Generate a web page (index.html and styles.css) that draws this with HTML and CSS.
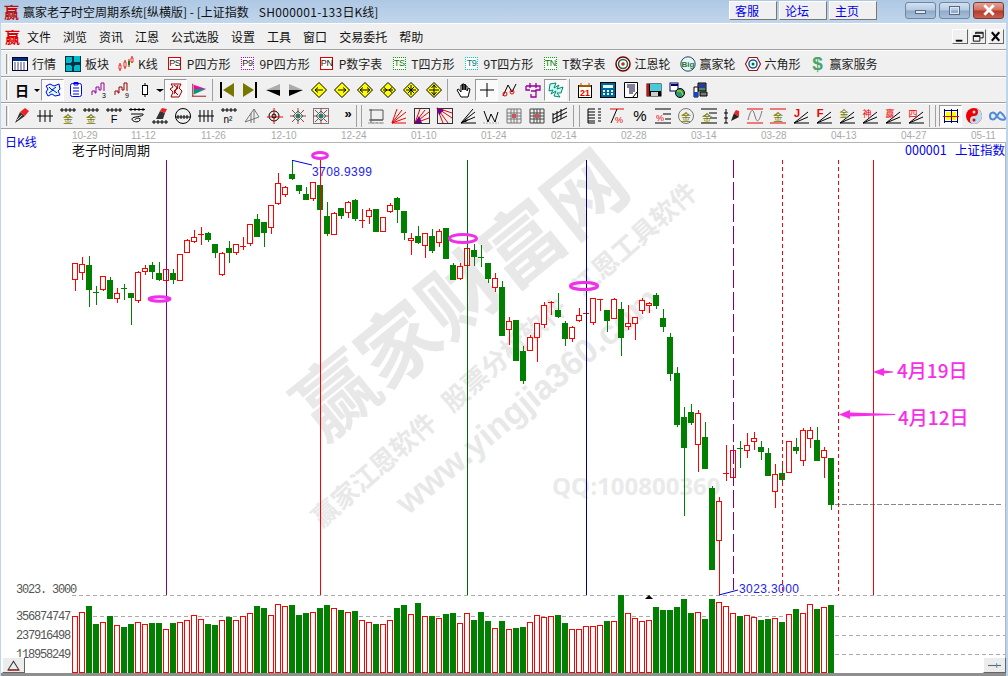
FILE: index.html
```html
<!DOCTYPE html>
<html lang="zh-CN">
<head>
<meta charset="utf-8">
<title>赢家老子时空周期系统</title>
<link rel="stylesheet" href="styles.css">
</head>
<body>
<svg class="defs" aria-hidden="true">
  <symbol id="dia" viewBox="0 0 16 16"><path d="M8 .5 15.5 8 8 15.5 .5 8Z" fill="#ff0" stroke="#000"/></symbol>
  <symbol id="fan" viewBox="0 0 16 16"><path d="M1 15H16M1 15 15 4M1 15 15 9" fill="none" stroke="#000"/></symbol>
  <symbol id="web" viewBox="0 0 16 16"><path d="M8 0V16M0 8H16M2 2 14 14M14 2 2 14" stroke="#c33" fill="none"/><path d="M8 3 13 8 8 13 3 8Z" fill="none" stroke="#087"/><circle cx="8" cy="8" r="2" fill="#087"/></symbol>
</svg>
<div class="titlebar">
  <span class="logo logo-title">赢</span>
  <span class="title-text">赢家老子时空周期系统[纵横版] - [上证指数<span class="title-code">SH000001-133</span>日K线]</span>
  <div class="links"><a class="link">客服</a><a class="link">论坛</a><a class="link">主页</a></div>
  <div class="winbtns">
    <span class="wb wb-min"><i class="wb-bar"></i></span>
    <span class="wb wb-max"><i class="wb-box"></i></span>
    <span class="wb wb-close"><svg class="wb-x" viewBox="0 0 12 10"><path d="M2 1 10 9M10 1 2 9" stroke="#fff" stroke-width="2.4"/></svg></span>
  </div>
</div>
<main class="main">
  <nav class="row menubar">
    <span class="logo logo-menu">赢</span>
    <span class="menu">文件</span><span class="menu">浏览</span><span class="menu">资讯</span><span class="menu">江恩</span><span class="menu">公式选股</span><span class="menu">设置</span><span class="menu">工具</span><span class="menu">窗口</span><span class="menu">交易委托</span><span class="menu">帮助</span>
    <div class="mdi">
      <span class="mdibtn"><svg viewBox="0 0 15 13"><path d="M3 10H10V12H3Z"/></svg></span>
      <span class="mdibtn"><svg viewBox="0 0 15 13"><path d="M5 2H13V8H10M5 2V4M5 3H13" fill="none" stroke="#000"/><path d="M2.500 5.500H9.500V11.500H2.500ZM2.500 6.500H9.500" fill="none" stroke="#000"/></svg></span>
      <span class="mdibtn"><svg viewBox="0 0 15 13"><path d="M3 2 11 11M11 2 3 11" stroke="#000" stroke-width="2.200"/></svg></span>
    </div>
  </nav>

  <div class="row tb1">
    <i class="grip"></i>
    <span class="item"><svg class="ic" viewBox="0 0 16 16"><rect x=".5" y="1.500" width="15" height="13" fill="#fff" stroke="#003"/><rect x="1" y="2" width="14" height="3" fill="#003080"/><path d="M2 7H14M2 9H14M2 11H14M2 13H14" stroke="#447" stroke-dasharray="2 1"/></svg><b>行情</b></span>
    <span class="item"><svg class="ic" viewBox="0 0 16 16"><rect width="16" height="16" fill="#034"/><path d="M1 1H7V7H1ZM9 0H15V6H9ZM1 9H7V15H1ZM9 9H15V15H9Z" fill="#0bc"/><path d="M6 6H10V10H6Z" fill="#034"/></svg><b>板块</b></span>
    <span class="item"><svg class="ic" viewBox="0 0 16 16"><path d="M2 7V15M7 4V13M11 3V11M14 0V7" stroke="#d00"/><path d="M1 9H3V13H1ZM6 6H8V11H6ZM13 2H15V6H13Z" fill="#fff" stroke="#e00" stroke-width=".8"/><path d="M10 5H12V9H10Z" fill="#080"/></svg><b>K线</b></span>
    <span class="item"><span class="ic tag tag-red">PS</span><b>P四方形</b></span>
    <span class="item"><span class="ic tag tag-purple">P9</span><b>9P四方形</b></span>
    <span class="item"><span class="ic tag tag-red">PN</span><b>P数字表</b></span>
    <span class="item"><span class="ic tag tag-green">TS</span><b>T四方形</b></span>
    <span class="item"><span class="ic tag tag-cyan">T9</span><b>9T四方形</b></span>
    <span class="item"><span class="ic tag tag-green">TN</span><b>T数字表</b></span>
    <span class="item"><svg class="ic" viewBox="0 0 16 16"><circle cx="8" cy="8" r="7" fill="#fff" stroke="#700" stroke-width="1.500"/><circle cx="8" cy="8" r="4.500" fill="none" stroke="#264" stroke-width="1.500"/><circle cx="8" cy="8" r="1.800" fill="#a33"/></svg><b>江恩轮</b></span>
    <span class="item"><svg class="ic" viewBox="0 0 16 16"><circle cx="8" cy="8" r="7.200" fill="#e8f4f4" stroke="#247" stroke-width="1"/><text class="big" x="8" y="11">Big</text></svg><b>赢家轮</b></span>
    <span class="item"><svg class="ic" viewBox="0 0 16 16"><path d="M4 1.500H12L15.500 8 12 14.500H4L.5 8Z" fill="#fff" stroke="#911" stroke-width="1.200"/><circle cx="8" cy="8" r="4" fill="none" stroke="#16a" stroke-width="1.600"/><circle cx="8" cy="8" r="1.500" fill="#071"/></svg><b>六角形</b></span>
    <span class="item"><span class="ic dollar">$</span><b>赢家服务</b></span>
  </div>

  <div class="row tb2">
    <i class="grip"></i>
    <span class="day">日<i class="caret"></i></span>
    <span class="btn pressed"><svg viewBox="0 0 16 16"><path d="M1 4 5 2 9 4 14 2 15 7 13 9 15 13 10 14 7 12 3 14 1 10 3 7Z" fill="#dff" stroke="#00e"/><path d="M4 5 7 8 11 5M4 11 8 8 12 11" fill="none" stroke="#00e"/></svg></span>
    <span class="btn"><svg viewBox="0 0 16 16"><rect x="2.500" y="1.500" width="11" height="13" rx="2" fill="#fff" stroke="#00e"/><path d="M6 .5H10V3H6ZM5 6H11M5 9H11M5 12H11" fill="none" stroke="#00e"/></svg></span>
    <span class="btn"><svg viewBox="0 0 16 16"><path d="M1 13V9H4V11H5V5H8V8H10V1H13V9" fill="none" stroke="#909"/><text class="mini" x="11" y="15.500">3</text></svg></span>
    <span class="btn"><svg viewBox="0 0 16 16"><path d="M1 13V9H4V11H5V5H8V8H10V1H13V9" fill="none" stroke="#900"/><text class="mini" x="11" y="15.500">9</text></svg></span>
    <span class="btn"><svg viewBox="0 0 16 16"><path d="M8 1V15" stroke="#000"/><rect x="5.500" y="3.500" width="5" height="9" fill="#fff" stroke="#000"/></svg></span>
    <i class="caret caret-side"></i>
    <span class="btn pressed"><svg viewBox="0 0 16 16"><path d="M3 2H13L11 6 14 9 11 15H3L5 10 2 7 5 5Z" fill="#fee" stroke="#900"/><path d="M6 3 10 6 6 9 10 13M10 3 6 12" fill="none" stroke="#900"/></svg></span>
    <span class="btn"><svg viewBox="0 0 18 16"><path d="M2 1V15M1 15H17" stroke="#900" fill="none"/><path d="M3 2 17 7H3Z" fill="#f0a"/><path d="M3 7H17L3 13Z" fill="#097"/></svg></span>
    <i class="vsep vsep5"></i>
    <span class="btn"><svg viewBox="0 0 16 16"><path d="M1 0H3V16H1Z" fill="#000"/><path d="M15 1V15L4 8Z" fill="#770"/></svg></span>
    <span class="btn"><svg viewBox="0 0 16 16"><path d="M13 0H15V16H13Z" fill="#000"/><path d="M1 1V15L12 8Z" fill="#770"/></svg></span>
    <span class="btn"><svg viewBox="0 0 16 16"><path d="M15 2V8H1Z" fill="#aaa"/><path d="M15 14V8H1Z" fill="#000"/></svg></span>
    <span class="btn"><svg viewBox="0 0 16 16"><path d="M1 2V8H15Z" fill="#aaa"/><path d="M1 14V8H15Z" fill="#000"/></svg></span>
    <span class="btn"><svg viewBox="0 0 16 16"><use href="#dia"/><path d="M4 8H12M4 8 7 5.500M4 8 7 10.500" fill="none" stroke="#000"/></svg></span>
    <span class="btn"><svg viewBox="0 0 16 16"><use href="#dia"/><path d="M4 8H12M12 8 9 5.500M12 8 9 10.500" fill="none" stroke="#000"/></svg></span>
    <span class="btn"><svg viewBox="0 0 16 16"><use href="#dia"/><path d="M3 8H13M3 8 6 5.500M3 8 6 10.500M13 8 10 5.500M13 8 10 10.500" fill="none" stroke="#000"/></svg></span>
    <span class="btn"><svg viewBox="0 0 16 16"><use href="#dia"/><path d="M3 8H13M7 8 4 5.500M7 8 4 10.500M9 8 12 5.500M9 8 12 10.500" fill="none" stroke="#000"/></svg></span>
    <span class="btn"><svg viewBox="0 0 16 16"><use href="#dia"/><path d="M3 8H13M8 3V13M5 5 11 11M11 5 5 11" fill="none" stroke="#000"/></svg></span>
    <span class="btn"><svg viewBox="0 0 16 16"><use href="#dia"/><path d="M3 8H13M8 2.500V13.500M8 3 5.500 6M8 3 10.500 6M8 13 5.500 10M8 13 10.500 10" fill="none" stroke="#000"/></svg></span>
    <i class="vsep vsep7"></i>
    <span class="btn"><svg viewBox="0 0 16 16"><path d="M5 15 1 8 2.500 7 5 10V3H6.500V8V2H8V8V2.500H9.500V8V4H11V9L12.500 6 14 7 12 15Z" fill="#fff" stroke="#000"/></svg></span>
    <span class="btn pressed"><svg viewBox="0 0 16 16"><path d="M8 1V15M1 8H15" stroke="#000"/></svg></span>
    <span class="btn"><svg viewBox="0 0 16 16"><path d="M1 14 6 3 10 10 14 2" fill="none" stroke="#000"/><circle cx="3" cy="12" r="2" fill="none" stroke="#e00"/><circle cx="10" cy="10" r="2" fill="none" stroke="#e00"/></svg></span>
    <span class="btn"><svg viewBox="0 0 16 16"><path d="M1 4H15V8H11V15H6V12M1 4V8H5M5 1V6M11 1V6M6 9H11" fill="none" stroke="#909" stroke-width="1.300"/></svg></span>
    <span class="btn pressed"><svg viewBox="0 0 16 16"><path d="M2 2 8 1 6 6 11 3 9 7 15 5 13 11 9 11 12 15 6 14 8 9 3 12 5 8 1 9Z" fill="#cfe" stroke="#087"/></svg></span>
    <i class="vsep vsep6"></i>
    <span class="btn"><svg viewBox="0 0 16 16"><rect x="1.500" y="3.500" width="13" height="12" fill="#ffe" stroke="#000"/><path d="M4 1V4M12 1V4" stroke="#a50"/><path d="M2 3H14V5H2Z" fill="#a50"/><text class="cal" x="8" y="13.500">21</text></svg></span>
    <span class="btn"><svg viewBox="0 0 16 16"><rect x=".5" y=".5" width="15" height="15" fill="#069" stroke="#000"/><path d="M3 3H13V6H3Z" fill="#dff"/><path d="M3 8H5V10H3ZM7 8H9V10H7ZM11 8H13V10H11ZM3 11H5V13H3ZM7 11H9V13H7ZM11 11H13V13H11Z" fill="#dff"/></svg></span>
    <span class="btn"><svg viewBox="0 0 16 16"><path d="M1.500 .5H14.500V15.500H1.500Z" fill="#fff" stroke="#000"/><path d="M4 3H12M4 5H12M6 7H12M6 9H12M6 11H10" stroke="#003"/><path d="M14 10 10 15" stroke="#000"/></svg></span>
    <span class="btn"><svg viewBox="0 0 16 16"><rect x=".5" y="1.500" width="15" height="13" fill="#000"/><path d="M1 2H3V14H1Z" fill="#e00"/><path d="M4 2H15V9H4Z" fill="#4cd"/><path d="M5 10H12V14H5Z" fill="#ccc"/></svg></span>
    <span class="btn"><svg viewBox="0 0 16 16"><rect x="1" y="1" width="8" height="8" fill="#fff" stroke="#006"/><path d="M2 2H9V4H2Z" fill="#006"/><circle cx="11" cy="11" r="4.500" fill="#297" stroke="#000"/><path d="M8 9H12L14 13" fill="none" stroke="#fc0"/></svg></span>
    <span class="btn"><svg viewBox="0 0 16 16"><path d="M6 1H14V9H6Z" fill="#486" stroke="#000"/><path d="M7 2H13V6H7Z" fill="#33a"/><path d="M2 5H6V15H2Z" fill="#fff" stroke="#000"/><path d="M2 10H6V15H2Z" fill="#14c"/><path d="M8 10H15V14H8Z" fill="#777" stroke="#000"/></svg></span>
  </div>

  <div class="row tb3">
    <i class="grip"></i>
    <span class="btn"><svg viewBox="0 0 16 16"><path d="M1 15 6 4 11 8Z" fill="#333"/><path d="M6 4 11 8 15 3 11 0Z" fill="#e22"/><path d="M3 12 8 7" stroke="#ccc"/></svg></span>
    <span class="btn"><svg viewBox="0 0 16 16"><path d="M3 2V14M8 2V14M13 2V14M0 8H16" stroke="#000"/></svg></span>
    <span class="btn"><svg viewBox="0 0 16 16"><path d="M2 0V4M6 0V4M10 0V4M14 0V4M0 2H16" stroke="#000"/><text class="g-jin" x="8" y="15">金</text></svg></span>
    <span class="btn"><svg viewBox="0 0 16 16"><path d="M2 0V4M6 0V4M10 0V4M14 0V4M0 2H16" stroke="#000"/><text class="g-jin" x="8" y="15">金</text></svg></span>
    <span class="btn"><svg viewBox="0 0 16 16"><path d="M2 0V4M6 0V4M10 0V4M14 0V4M0 2H16" stroke="#000"/><text class="g-f" x="8" y="15">F</text></svg></span>
    <span class="btn"><svg viewBox="0 0 16 16"><path d="M2 0V3M6 0V3M10 0V3M14 0V3M0 1.500H16M2 6H14C16 9 3 8 3 11S10 15 11 12 6 10 6 12" stroke="#000" fill="none"/></svg></span>
    <span class="btn"><svg viewBox="0 0 16 16"><path d="M4 11 8 3 13 5 11 11Z" fill="#333"/><path d="M8 3 13 5 15 1 10 0Z" fill="#e22"/><path d="M0 14H16M2 12V16M6 12V16M10 12V16M14 12V16" stroke="#000"/></svg></span>
    <span class="btn"><svg viewBox="0 0 16 16"><circle cx="8" cy="8" r="7.500" fill="none" stroke="#000"/><path d="M0 9H16M3 7V11M6 7V11M9 7V11M12 7V11" stroke="#000"/></svg></span>
    <span class="btn"><svg viewBox="0 0 16 16"><path d="M2 2V14M6 2V14M10 2V14M14 2V14M0 8H16" stroke="#000"/></svg></span>
    <span class="btn"><svg viewBox="0 0 16 16"><path d="M2 0V4M6 0V4M10 0V4M14 0V4M0 2H16" stroke="#000"/><text class="g-n" x="7" y="15">n²</text></svg></span>
    <span class="btn"><svg viewBox="0 0 16 16"><path d="M1 14 10 1 15 9ZM7 5V15M10 1V15" fill="none" stroke="#777"/></svg></span>
    <span class="btn"><svg viewBox="0 0 16 16"><circle cx="7" cy="8" r="5" fill="none" stroke="#000"/><path d="M7 0V16M0 9H16" stroke="#e00"/><circle cx="7" cy="8" r="2" fill="none" stroke="#000"/></svg></span>
    <span class="btn"><svg viewBox="0 0 16 16"><use href="#web"/></svg></span>
    <span class="btn"><svg viewBox="0 0 16 16"><rect x=".5" y=".5" width="15" height="15" fill="none" stroke="#777"/><use href="#web"/></svg></span>
    <span class="btn more">»</span>
    <i class="vsep vsep9"></i>
    <span class="btn"><svg viewBox="0 0 16 16"><path d="M3 1V15M1 2H15V12H3M1 12H15" fill="none" stroke="#555"/><path d="M0 15H16M5 14V16M9 14V16M13 14V16" stroke="#999"/></svg></span>
    <span class="btn"><svg viewBox="0 0 16 16"><path d="M1 15 6 1M1 15 11 2M1 15 15 4M1 15 15 10M1 15H15" stroke="#e00" fill="none"/></svg></span>
    <span class="btn"><svg viewBox="0 0 16 16"><rect x=".5" y=".5" width="15" height="15" fill="none" stroke="#333"/><path d="M1 15 6 1M1 15 11 2M1 15 15 4M1 15 15 10" stroke="#e00"/><path d="M1 15 5 8 8 15Z" fill="#609"/></svg></span>
    <span class="btn"><svg viewBox="0 0 16 16"><rect x=".5" y=".5" width="15" height="15" fill="none" stroke="#333"/><path d="M0 0 6 15M0 0 11 15M0 0 15 10M0 0 15 5" stroke="#e00"/><path d="M0 0 7 2 2 7Z" fill="#609"/></svg></span>
    <span class="btn"><svg viewBox="0 0 16 16"><use href="#fan"/><path d="M1 15 13 1" stroke="#000"/><path d="M2 14 8 11 6 14Z" fill="#000"/></svg></span>
    <span class="btn"><svg viewBox="0 0 16 16"><path d="M1 3 5 14 8 6 12 14 15 4" fill="none" stroke="#000"/><path d="M0 15H16" stroke="#aaa" stroke-dasharray="2 1"/></svg></span>
    <span class="btn"><svg viewBox="0 0 16 16"><path d="M1 1H15V15H1ZM5 1V15M8 1V15M11 1V15M1 5H15M1 8H15M1 11H15" fill="none" stroke="#777"/><path d="M6 6H10V10H6Z" fill="#c55"/></svg></span>
    <span class="btn"><svg viewBox="0 0 16 16"><path d="M1 1V15H15M5 1V15M8 1V15M11 1V15M1 5H15M1 8H15M1 11H15M1 1H15V15" fill="none" stroke="#444"/><path d="M6 6H10V10H6Z" fill="#c55"/></svg></span>
    <span class="btn"><svg viewBox="0 0 16 16"><path d="M1 15 15 8M1 11 15 4M1 7 15 0M1 5V15M5 3V13M9 1V11" stroke="#000" fill="none"/></svg></span>
    <i class="vsep vsep11"></i>
    <span class="btn"><svg viewBox="0 0 16 16"><path d="M2 1V15M2 1H9M2 4H9M2 7H9M2 10H9M2 13H9M2 15H9" stroke="#000" fill="none"/><path d="M12 1H15M12 4H15M12 7H15M12 10H15M12 13H15" stroke="#000"/></svg></span>
    <span class="btn"><svg viewBox="0 0 16 16"><path d="M1 1H15" stroke="#e00"/><path d="M2 15 8 1" stroke="#000"/><text class="g-pct red" x="10" y="15">%</text></svg></span>
    <span class="btn"><svg viewBox="0 0 16 16"><text class="g-pct big-pct" x="8" y="13">%</text></svg></span>
    <span class="btn"><svg viewBox="0 0 16 16"><path d="M0 1H16M8 6H16M10 11H16M0 15H16" stroke="#000"/><text class="g-pct red" x="5" y="13">%</text></svg></span>
    <span class="btn"><svg viewBox="0 0 16 16"><circle cx="8" cy="8" r="7.500" fill="none" stroke="#777"/><text class="g-jin" x="8" y="12.500">金</text></svg></span>
    <span class="btn"><svg viewBox="0 0 16 16"><path d="M0 1H16M8 5H16M9 10H16M0 15H16" stroke="#000"/><text class="g-jin" x="6" y="13.500">金</text></svg></span>
    <span class="btn"><svg viewBox="0 0 16 16"><path d="M2 1V15M0 5H4M0 10H4M0 15H4" stroke="#000"/><path d="M7 13 10 5 15 9Z" fill="#222"/><path d="M10 5 15 9 15 3 12 2Z" fill="#e22"/></svg></span>
    <span class="btn"><svg viewBox="0 0 16 16"><path d="M0 1H16M0 15H16" stroke="#e00"/><path d="M1 12C4 0 6 0 8 8S12 14 15 3" fill="none" stroke="#777"/></svg></span>
    <span class="btn"><svg viewBox="0 0 16 16"><path d="M0 1H16M0 15H16" stroke="#e00"/><text class="g-jin" x="8" y="13">金</text></svg></span>
    <span class="btn"><svg viewBox="0 0 16 16"><use href="#fan"/><text class="g-fan red" x="4" y="9">J</text></svg></span>
    <span class="btn"><svg viewBox="0 0 16 16"><use href="#fan"/><text class="g-fan red" x="4" y="9">F</text></svg></span>
    <span class="btn"><svg viewBox="0 0 16 16"><use href="#fan"/><text class="g-small olive" x="5" y="9">金</text></svg></span>
    <span class="btn"><svg viewBox="0 0 16 16"><use href="#fan"/><text class="g-small red" x="5" y="9">神</text></svg></span>
    <span class="btn"><svg viewBox="0 0 16 16"><use href="#fan"/><text class="g-small red" x="5" y="9">赢</text></svg></span>
    <span class="btn"><svg viewBox="0 0 16 16"><use href="#fan"/><text class="g-small red" x="5" y="9">四</text></svg></span>
    <i class="vsep vsep12"></i>
    <span class="btn pressed"><svg viewBox="0 0 16 16"><rect x="3" y="4" width="10" height="8" fill="#ff0"/><path d="M1.500 1V15M14.500 1V15M1 2.500H15M1 13.500H15M8.500 1V15" stroke="#006" fill="none"/><path d="M0 8.500H16" stroke="#e00"/></svg></span>
    <span class="btn"><svg viewBox="0 0 16 16"><circle cx="8" cy="8" r="8" fill="#e00"/><path d="M8 0A8 8 0 0 1 8 16A4 4 0 0 1 8 8A4 4 0 0 0 8 0Z" fill="#bde"/><circle cx="8" cy="4" r="1.500" fill="#bde"/><circle cx="8" cy="12" r="1.500" fill="#e00"/></svg></span>
    <span class="btn"><svg viewBox="0 0 16 16"><path d="M8 8C5 3 1 4 1 8S5 13 8 8 11 3 15 8 11 13 8 8Z" fill="#def" stroke="#58c" stroke-width="2"/></svg></span>
  </div>

  <section class="chart">
    <svg id="kline" class="kline" viewBox="1 129 1005 544" width="1005" height="544">
      <g class="watermark">
        <text class="wm-big" x="457" y="290" transform="rotate(-39 457 290)">赢家财富网</text>
        <text class="wm-mid" x="503" y="353" transform="rotate(-41.500 503 353)">赢家江恩软件 股票分析软件 江恩工具软件</text>
        <text class="wm-url" x="527" y="400" transform="rotate(-40 527 400)">www.yingjia360.com</text>
        <text class="wm-qq" x="552" y="495">QQ:100800360</text>
      </g>
      <text class="kind" x="5" y="147">日K线</text>
      <g class="dates">
        <text x="72" y="139">10-29</text><text x="131" y="139">11-12</text><text x="201" y="139">11-26</text><text x="271" y="139">12-10</text><text x="341" y="139">12-24</text><text x="411" y="139">01-10</text><text x="481" y="139">01-24</text><text x="551" y="139">02-14</text><text x="621" y="139">02-28</text><text x="691" y="139">03-14</text><text x="761" y="139">03-28</text><text x="831" y="139">04-13</text><text x="901" y="139">04-27</text><text x="971" y="139">05-11</text>
      </g>
      <path class="frame" d="M72 142.500H1005M1005.500 142V673"/>
      <text class="chart-name" x="72" y="155">老子时间周期</text>
      <text class="symbol" x="905" y="155">000001   上证指数</text>
      <g class="axis">
        <text x="16" y="593">3023. 3000</text>
        <text x="16" y="620">356874747</text>
        <text x="16" y="639">237916498</text>
        <text x="16" y="658">118958249</text>
      </g>
      <path class="grid" d="M72 595.500H1005M72 616.500H1005M72 635.500H1005M72 654.500H1005"/>
      <g id="vols"></g>
      <g id="candles"></g>
      <path class="price" d="M835 504.500H1002"/>
      <path class="v v-purple" d="M166.500 160V595"/>
      <path class="v v-red" d="M320.500 157V595"/>
      <path class="v v-green" d="M467.500 160V595"/>
      <path class="v v-navy" d="M586.500 160V595"/>
      <path class="v v-dash" d="M733.500 160V590"/>
      <path class="v v-dot" d="M782.500 160V595M838.500 160V595"/>
      <path class="v v-red" d="M873.500 160V595"/>
      <ellipse class="ring" cx="159.500" cy="299" rx="10.500" ry="2.200"/>
      <ellipse class="ring" cx="320" cy="155.500" rx="7.500" ry="3"/>
      <ellipse class="ring" cx="463" cy="238.500" rx="13.500" ry="4"/>
      <ellipse class="ring" cx="584" cy="286" rx="13.500" ry="3.500"/>
      <path class="conn" d="M292 160.500H293L312 165"/>
      <path class="conn" d="M719 595 738 590"/>
      <text class="hl" x="312" y="176">3708.9399</text>
      <text class="hl" x="739" y="593">3023.3000</text>
      <path class="tri" d="M649 595 653 599H645Z"/>
      <path class="arrow" d="M873 372 884 368V370.500L893 371.500V372.500L884 373.500V376Z"/>
      <path class="arrow" d="M839 414.500 850 410V412.500L895 414V415L850 416.500V419Z"/>
      <text class="note" x="897" y="378">4月19日</text>
      <text class="note" x="898" y="425">4月12日</text>
    </svg>
    <span class="corner corner-l"><svg viewBox="0 0 12 10"><path d="M6 1 11 9H1Z" fill="none" stroke="#333"/><path d="M1 9.500H11" stroke="#c33"/></svg></span>
    <span class="corner corner-r"><svg viewBox="0 0 12 6"><path d="M0 3H12" stroke="#666"/><path d="M8 1V5" stroke="#39c"/></svg></span>
  </section>
</main>
<script src="chart.js"></script>
</body>
</html>
```

FILE: styles.css
```css
* { box-sizing: border-box; }
html, body { margin: 0; padding: 0; }
body {
  width: 1008px;
  height: 676px;
  overflow: hidden;
  display: flex;
  flex-direction: column;
  font: 12px "Noto Sans CJK SC", sans-serif;
  color: #000;
  background: #b9d1ea;
}
.defs { position: absolute; width: 0; height: 0; }

/* title bar */
.titlebar {
  height: 23px;
  flex: none;
  display: flex;
  align-items: center;
  background: linear-gradient(#aec8e4, #c1d6ec);
}
.logo { color: #d00; font-weight: 700; line-height: 1; }
.logo-title { font-size: 15px; margin-left: 4px; width: 19px; color: #b11; }
.title-text { white-space: pre; color: #111; }
.title-code { margin-left: 10px; letter-spacing: .32px; }
.links { margin-left: auto; display: flex; gap: 2px; margin-top: -2px; }
.link {
  width: 48px;
  height: 19px;
  padding-left: 5px;
  line-height: 18px;
  color: #00e;
  background: #f0f0f0;
  border: 1px solid #fff;
  border-right-color: #777;
  border-bottom-color: #777;
}
.winbtns { display: flex; gap: 3px; margin-left: 28px; margin-right: 4px; margin-top: -3px; }
.wb {
  width: 31px;
  height: 17px;
  border: 1px solid #6d87a5;
  border-radius: 3px;
  display: flex;
  align-items: center;
  justify-content: center;
  background: linear-gradient(#d3e1f0 0, #b4c9e0 48%, #8fa9c8 52%, #a9c0da 100%);
}
.wb-close { background: linear-gradient(#e6a498 0, #cf6f5f 48%, #b5392a 52%, #c7604f 100%); border-color: #7c3a30; }
.wb-bar { width: 11px; height: 4px; background: #dfe8f2; border: 1px solid #55697f; margin-top: 3px; }
.wb-box { width: 11px; height: 9px; border: 2px solid #dfe8f2; outline: 1px solid #55697f; outline-offset: -1px; }
.wb-x { width: 14px; height: 12px; }

/* rows */
.main {
  flex: 1;
  display: flex;
  flex-direction: column;
  border-left: 1px solid #bcd4ec;
  border-right: 2px solid #bcd4ec;
  background: #f0f0f0;
  min-height: 0;
}
.row {
  flex: none;
  display: flex;
  align-items: center;
  background: #f0f0f0;
  border-top: 1px solid #fff;
  border-bottom: 1px solid #a0a0a0;
}
.menubar { height: 27px; padding-left: 4px; }
.tb1 { height: 27px; padding-left: 5px; }
.tb2, .tb3 { height: 26px; padding-left: 5px; }

.logo-menu { font-size: 15px; width: 16px; margin-right: 6px; }
.menu { margin-right: 12px; color: #111; }
.mdi { margin-left: auto; display: flex; gap: 2px; margin-right: 2px; }
.mdibtn {
  width: 16px;
  height: 15px;
  background: #f0f0f0;
  border: 1px solid #fff;
  border-right-color: #666;
  border-bottom-color: #666;
  display: flex;
}
.mdibtn svg { width: 100%; height: 100%; }

.grip {
  flex: none;
  width: 3px;
  height: 20px;
  border-left: 1px solid #999;
  border-right: 1px solid #fff;
  background: #e4e4e4;
}

/* text toolbar */
.item { display: flex; align-items: center; gap: 4px; margin-right: 9px; }
.item b { font-weight: 400; color: #222; white-space: nowrap; }
.tb1 .grip { margin-right: 3px; }
.ic { width: 16px; height: 16px; flex: none; }
.tag {
  display: flex;
  align-items: center;
  justify-content: center;
  width: 13px;
  height: 13px;
  margin: 0 1.500px;
  font: 9px/1 "Liberation Sans", sans-serif;
  letter-spacing: -.4px;
  background: #fff;
  color: #222;
}
.tag-red { border: 1px solid #d00; }
.tag-purple { border: 1px dotted #c0c; }
.tag-green { border: 1px dotted #0a0; color: #070; }
.tag-cyan { border: 1px dotted #0cc; color: #077; }
.dollar { font: 700 19px/16px "Liberation Sans", sans-serif; color: #4aa56d; text-align: center; }
.big { font: 700 8px "Liberation Sans", sans-serif; fill: #1a7a3a; text-anchor: middle; }

/* icon toolbars */
.btn {
  flex: none;
  width: 23px;
  height: 22px;
  display: flex;
  align-items: center;
  justify-content: center;
}
.btn svg { width: 16px; height: 16px; overflow: visible; }
.btn.pressed {
  background: #fafafa;
  border: 1px solid #fff;
  border-top-color: #999;
  border-left-color: #999;
}
.tb2 .grip { margin-right: 3px; }
.tb3 .grip { margin-right: 1px; }
.day {
  flex: none;
  width: 29px;
  padding-left: 3px;
  font-size: 14px;
  font-weight: 700;
  display: flex;
  align-items: center;
  gap: 5px;
}
.caret {
  display: block;
  flex: none;
  width: 0;
  height: 0;
  border: 3px solid transparent;
  border-top: 3px solid #000;
  border-bottom: 0;
}
.caret-side { width: 8px; margin-right: 0; border-left-width: 4px; border-right-width: 4px; }
.vsep { flex: none; height: 22px; background: linear-gradient(#a0a0a0, #a0a0a0) 2px 0 / 1px 100% no-repeat; }
.vsep5 { width: 5px; }
.vsep6 { width: 6px; }
.vsep7 { width: 7px; }
.vsep9 {
  width: 9px;
  background:
    linear-gradient(#a0a0a0, #a0a0a0) 1px 0 / 1px 100% no-repeat,
    linear-gradient(#a0a0a0, #a0a0a0) 6px 0 / 1px 100% no-repeat;
}
.vsep11 {
  width: 11px;
  background:
    linear-gradient(#a0a0a0, #a0a0a0) 2px 0 / 1px 100% no-repeat,
    linear-gradient(#a0a0a0, #a0a0a0) 8px 0 / 1px 100% no-repeat;
}
.vsep12 {
  width: 12px;
  background:
    linear-gradient(#a0a0a0, #a0a0a0) 2px 0 / 1px 100% no-repeat,
    linear-gradient(#a0a0a0, #a0a0a0) 8px 0 / 1px 100% no-repeat;
}
.more { font: 700 13px "Liberation Sans", sans-serif; padding-left: 9px; padding-bottom: 6px; }

/* glyphs inside icons */
.mini { font: 7px "Liberation Sans", sans-serif; fill: #000; }
.cal { font: 700 9px "Liberation Sans", sans-serif; fill: #e00; text-anchor: middle; }
.g-jin { font: 10px "Noto Sans CJK SC", sans-serif; fill: #770; text-anchor: middle; }
.g-f { font: 11px "Liberation Sans", sans-serif; fill: #000; text-anchor: middle; }
.g-n { font: 10px "Liberation Sans", sans-serif; fill: #000; text-anchor: middle; }
.g-pct { font: 9px "Liberation Sans", sans-serif; text-anchor: middle; }
.big-pct { font-size: 15px; fill: #000; }
.g-fan { font: 700 11px "Liberation Sans", sans-serif; text-anchor: middle; }
.g-small { font: 9px "Noto Sans CJK SC", sans-serif; text-anchor: middle; }
.red { fill: #e00; }
.olive { fill: #770; }

/* chart */
.chart {
  position: relative;
  flex: 1;
  min-height: 0;
  background: #fff;
}
.kline { display: block; background: #fff; }
.wm-big { font: 700 80px "Noto Sans CJK SC", sans-serif; fill: #e8e8e8; text-anchor: middle; dominant-baseline: central; }
.wm-mid { font: 700 26px "Noto Sans CJK SC", sans-serif; word-spacing: 12px; fill: #e8e8e8; text-anchor: middle; dominant-baseline: central; }
.wm-url { font: 700 34px "Liberation Sans", sans-serif; fill: #e8e8e8; text-anchor: middle; dominant-baseline: central; }
.wm-qq { font: 700 24px "Open Sans", sans-serif; fill: #eaeaea; }
.kind { font: 12px "Noto Sans CJK SC", sans-serif; fill: #00e; }
.dates text { font: 10px "Liberation Sans", sans-serif; fill: #aaa; }
.frame { fill: none; stroke: #b4b4b4; shape-rendering: crispEdges; }
.chart-name { font: 13px "Noto Sans CJK SC", sans-serif; fill: #111; }
.symbol { font: 12.500px "Noto Sans CJK SC", sans-serif; fill: #00e; white-space: pre; }
.axis text { font: 12px "Liberation Mono", monospace; letter-spacing: -1.200px; fill: #555; white-space: pre; }
.grid { fill: none; stroke: #aaa; stroke-dasharray: 4 3; shape-rendering: crispEdges; }
.price { fill: none; stroke: #888; stroke-dasharray: 5 2; shape-rendering: crispEdges; }
.v { fill: none; stroke-width: 1; shape-rendering: crispEdges; }
.v-purple { stroke: #800080; }
.v-red { stroke: #f00; }
.v-green { stroke: #006400; }
.v-navy { stroke: #000080; }
.v-dash { stroke: #800080; stroke-dasharray: 18 4; }
.v-dot { stroke: #f00; stroke-dasharray: 4 3; }
.ring { fill: none; stroke: #f02fe8; stroke-width: 3; }
.conn { fill: none; stroke: #00d; }
.hl { font: 12px "Liberation Sans", sans-serif; letter-spacing: .4px; fill: #2222ee; }
.tri { fill: #000; }
.arrow { fill: #f62ee8; }
.note { font: 500 19px "Noto Sans CJK SC", sans-serif; fill: #f62ee8; }
.up { fill: #fff; stroke: #f00; shape-rendering: crispEdges; }
.up-line { fill: #f00; shape-rendering: crispEdges; }
.down { fill: #007f00; shape-rendering: crispEdges; }
.corner {
  position: absolute;
  top: 528px;
  width: 23px;
  height: 16px;
  background: #ececec;
  border: 1px solid #fff;
  border-right-color: #666;
  border-bottom-color: #666;
  display: flex;
  align-items: center;
  justify-content: center;
}
.corner-l { left: 1px; }
.corner-r { left: 982px; }
.corner svg { width: 13px; height: 11px; }
.chart::after {
  content: "";
  position: absolute;
  left: 0;
  right: 0;
  bottom: 0;
  height: 3px;
  background: #8f8f8f;
}
```

FILE: chart.js
```js
// candles: [kind, wick top, body top, body bottom, wick bottom] measured at 3x from a base y
var SEG = [
  { base: 160, rows: [
    ['r',310,310,358,392],['r',292,313,337,360],['g',288,316,386,440],['g',378,397,397,435],['r',347,349,386,392],
    ['g',352,361,413,413],['r',385,400,413,428],['g',372,385,385,420],['g',400,400,410,494],['r',333,337,421,428],
    ['r',316,325,332,345],['g',306,316,332,357],['g',306,340,356,362],['r',328,328,361,361],['g',327,340,356,371],
    ['r',283,283,359,363],['r',238,241,277,277],['r',210,230,242,248],['r',201,223,223,254],['g',217,220,236,245],
    ['g',252,252,275,293],['r',277,280,341,347],['g',243,265,275,308],['r',253,253,277,284],['r',232,259,259,270],
    ['r',193,193,250,257],['g',162,178,227,230],['g',185,186,215,260],['r',136,136,200,221],['r',40,70,128,134]
  ]},
  { base: 140, rows: [
    ['r',138,142,163,170],['g',60,102,114,120],['g',135,135,149,161],['g',140,162,176,180],['r',127,127,173,182],
    ['g',135,135,206,206],['g',186,228,278,287],['r',217,220,283,283],['g',203,204,224,236],['r',184,187,217,234],
    ['g',178,180,233,242],['r',207,240,240,263],['r',205,211,229,252],['g',208,208,272,272],['r',232,232,272,275],
    ['r',190,194,214,218],['g',172,174,206,248],['g',214,214,275,299],['r',280,295,301,344],['g',258,289,305,312],
    ['r',280,280,316,353],['g',267,289,329,338],['r',266,274,307,320],['g',265,265,353,353],['g',370,375,416,420],
    ['r',370,379,415,419],['r',315,325,376,376],['g',313,331,347,378],['g',315,352,352,380],['g',369,369,413,428],
    ['r',400,413,440,455],['g',424,442,584,584],['r',532,544,566,614],['g',541,541,660,663],['g',618,634,719,731],
    ['r',585,592,631,631],['r',549,549,592,665],['r',487,496,551,563],['r',482,486,490,525],['g',460,511,527,533],
    ['g',544,550,593,617],['r',558,562,593,605],['r',505,524,539,545],['r',520,520,523,523],['r',475,475,547,556],
    ['r',476,478,478,513],['g',511,511,539,576],['r',475,478,535,535],['g',487,508,590,647],['r',495,550,559,570],
    ['r',530,530,550,599],['r',475,481,511,521],['r',487,490,496,518],['g',460,466,494,506],['g',507,535,557,576]
  ]},
  { base: 340, rows: [
    ['g',-20,-10,98,122],['g',82,100,251,260],['g',201,232,320,527],['g',192,217,245,255],['r',211,220,313,395],
    ['g',246,292,383,383],['g',438,445,686,686],['r',472,484,601,765],['r',315,400,400,422],['r',315,331,412,412],
    ['g',303,325,325,383],['r',280,316,331,353],['r',277,295,304,331],['g',303,322,332,360],['g',325,340,404,407],
    ['r',372,403,454,503],['g',375,400,418,437],['r',304,304,395,398],['g',294,321,330,342],['r',265,271,361,377],
    ['r',262,271,295,323],['g',261,300,359,359],['r',322,331,352,413],['g',355,355,491,509]
  ]}
];

// volume bars: top measured at 3x from y = 580; kind comes from the candle
var VOL = [109,97,78,132,127,108,136,141,132,127,133,129,129,148,129,127,121,106,118,132,135,121,111,121,109,100,78,84,106,73,
  79,75,105,100,97,84,75,85,90,97,93,121,127,132,133,121,84,75,103,69,109,108,115,102,99,130,100,120,96,123,145,123,148,144,141,
  127,106,112,109,105,129,148,148,139,139,136,123,124,45,100,115,124,121,81,90,90,81,57,99,97,117,57,67,79,100,108,106,112,120,
  117,115,126,103,87,100,73,87,82,75];

var NS = 'http://www.w3.org/2000/svg';
function add(parent, cls, x, y, w, h) {
  var r = document.createElementNS(NS, 'rect');
  r.setAttribute('class', cls);
  r.setAttribute('x', x);
  r.setAttribute('y', y);
  r.setAttribute('width', w);
  r.setAttribute('height', h);
  parent.appendChild(r);
}

var candles = document.getElementById('candles');
var vols = document.getElementById('vols');
var kinds = [];
var i = 0;
SEG.forEach(function (seg) {
  seg.rows.forEach(function (c) {
    var y = function (v) { return Math.round(seg.base + v / 3); };
    var x = 72 + 7 * i;
    var up = c[0] === 'r';
    var wt = y(c[1]), bt = y(c[2]), bb = y(c[3]), wb = y(c[4]);
    kinds.push(up);
    add(candles, up ? 'up-line' : 'down', x + 3, wt, 1, Math.max(wb - wt, 1));
    if (bb - bt < 2) {
      add(candles, up ? 'up-line' : 'down', x, bt, 6, Math.max(bb - bt, 1));
    } else if (up) {
      add(candles, 'up', x + 0.5, bt + 0.5, 5, bb - bt);
    } else {
      add(candles, 'down', x, bt, 6, bb - bt + 1);
    }
    i++;
  });
});

VOL.forEach(function (top, n) {
  var x = 72 + 7 * n;
  var t = Math.round(580 + top / 3);
  if (kinds[n]) {
    add(vols, 'up', x + 0.5, t + 0.5, 5, 672 - t);
  } else {
    add(vols, 'down', x, t, 6, 673 - t);
  }
});
```
